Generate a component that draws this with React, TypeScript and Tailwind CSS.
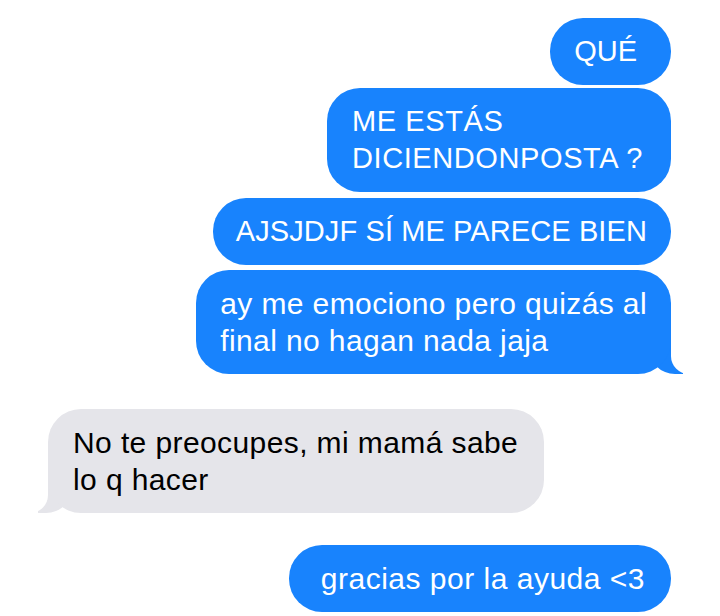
import type { ReactNode } from "react";

const BLUE = "bg-[#1883fd]";

/** 发出的气泡（蓝色，右对齐），tail=true 时在右下角画尾巴 */
function Sent({
  children,
  tail,
  className = "",
  inner = "px-6",
}: {
  children: ReactNode;
  tail?: boolean;
  className?: string;
  inner?: string;
}) {
  return (
    <div className={`relative self-end ${className}`}>
      <div className={`relative z-[1] rounded-[33px] ${BLUE} py-[15px] text-white ${inner}`}>{children}</div>
      {tail && (
        <>
          <span className={`absolute bottom-0 right-[-12px] h-[40px] w-[34px] rounded-bl-[26px] ${BLUE}`} />
          <span className="absolute bottom-0 right-[-44px] z-[2] h-[42px] w-[44px] rounded-bl-[18px] bg-white" />
        </>
      )}
    </div>
  );
}

/** 收到的气泡（浅灰，左对齐），尾巴在左下角 */
function Received({ children }: { children: ReactNode }) {
  return (
    <div className="relative self-start">
      <div className="relative z-[1] rounded-[33px] bg-[#e5e5ea] py-[15px] pl-[25px] pr-[26px] text-[30px] tracking-[0.4px] text-black">
        {children}
      </div>
      <span className="absolute bottom-0 left-[-10px] h-[40px] w-[34px] rounded-br-[26px] bg-[#e5e5ea]" />
      <span className="absolute bottom-0 left-[-44px] z-[2] h-[42px] w-[44px] rounded-br-[18px] bg-white" />
    </div>
  );
}

export default function App() {
  return (
    <div
      className="flex h-[616px] w-[720px] flex-col overflow-hidden bg-white pl-[48px] pr-[49px] pt-[18px] text-[29px] leading-[37px]"
      style={{ fontFamily: '"Liberation Sans", Arial, sans-serif' }}
    >
      <Sent inner="pl-[24px] pr-[34px]">QUÉ</Sent>
      <Sent className="mt-[3px]" inner="pl-[25px] pr-[28px] tracking-[0.6px]">
        ME ESTÁS
        <br />
        DICIENDONPOSTA ?
      </Sent>
      <Sent className="mt-[6px]" inner="pl-[23px] pr-6 tracking-[0.1px]">
        AJSJDJF SÍ ME PARECE BIEN
      </Sent>
      <Sent className="mt-[5px]" tail inner="px-6 text-[30px] tracking-[0.4px]">
        ay me emociono pero quizás al
        <br />
        final no hagan nada jaja
      </Sent>
      <div className="mt-[35px] flex flex-col">
        <Received>
          No te preocupes, mi mamá sabe
          <br />
          lo q hacer
        </Received>
      </div>
      <Sent className="mt-[32px]" inner="pl-[32px] pr-[26px] text-[30px] tracking-[0.5px]">
        gracias por la ayuda &lt;3
      </Sent>
    </div>
  );
}
